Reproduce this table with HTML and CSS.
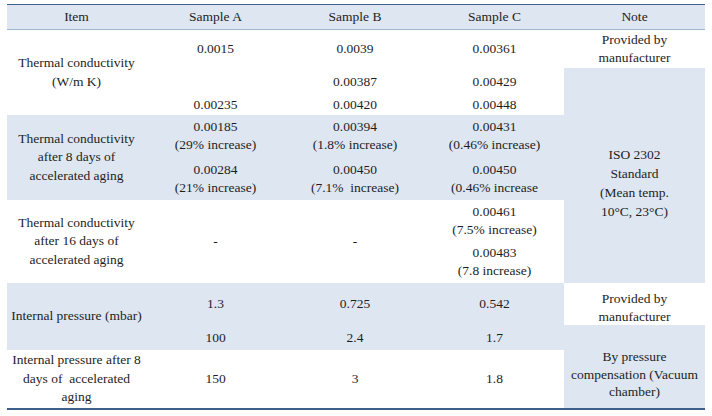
FILE: index.html
```html
<!DOCTYPE html>
<html>
<head>
<meta charset="utf-8">
<link rel="stylesheet" href="styles.css">
</head>
<body>
<div class="table">
  <div class="c head">Item</div>
  <div class="c head">Sample A</div>
  <div class="c head">Sample B</div>
  <div class="c head">Sample C</div>
  <div class="c head">Note</div>

  <div class="c label s3">Thermal conductivity<br>(W/m K)</div>
  <div class="c">0.0015</div>
  <div class="c">0.0039</div>
  <div class="c">0.00361</div>
  <div class="c">Provided by<br>manufacturer</div>

  <div class="c"></div>
  <div class="c">0.00387</div>
  <div class="c">0.00429</div>
  <div class="c blue s6 iso">ISO 2302<br>Standard<br>(Mean temp.<br>10°C, 23°C)</div>

  <div class="c">0.00235</div>
  <div class="c">0.00420</div>
  <div class="c">0.00448</div>

  <div class="c label blue s2">Thermal conductivity<br>after 8 days of<br>accelerated aging</div>
  <div class="c blue">0.00185<br>(29% increase)</div>
  <div class="c blue">0.00394<br>(1.8% increase)</div>
  <div class="c blue">0.00431<br>(0.46% increase)</div>

  <div class="c blue">0.00284<br>(21% increase)</div>
  <div class="c blue">0.00450<br>(7.1%&nbsp; increase)</div>
  <div class="c blue">0.00450<br>(0.46% increase</div>

  <div class="c label s2">Thermal conductivity<br>after 16 days of<br>accelerated aging</div>
  <div class="c s2">-</div>
  <div class="c s2">-</div>
  <div class="c">0.00461<br>(7.5% increase)</div>

  <div class="c">0.00483<br>(7.8 increase)</div>

  <div class="c label blue s2">Internal pressure (mbar)</div>
  <div class="c blue">1.3</div>
  <div class="c blue">0.725</div>
  <div class="c blue">0.542</div>
  <div class="c prov">Provided by<br>manufacturer</div>

  <div class="c blue">100</div>
  <div class="c blue">2.4</div>
  <div class="c blue">1.7</div>
  <div class="c blue s2 press">By pressure<br>compensation (Vacuum<br>chamber)</div>

  <div class="c label">Internal pressure after 8<br>days of&nbsp; accelerated<br>aging</div>
  <div class="c">150</div>
  <div class="c">3</div>
  <div class="c">1.8</div>
</div>
</body>
</html>
```

FILE: styles.css
```css
html, body {
  margin: 0;
  padding: 0;
  background: #ffffff;
}

body {
  padding: 4px 7px 0 7px;
  font-family: "Liberation Serif", "Times New Roman", serif;
  font-size: 13.5px;
  color: #1e1e1e;
}

.table {
  width: 698px;
  display: grid;
  grid-template-columns: 139px 139px 140px 139px 141px;
  grid-template-rows: 25px 38px 27px 20px 42px 43px 41px 42px 42px 25px 58px;
  border-top: 1px solid #3d5f8c;
  border-bottom: 2px solid #3d5f8c;
}

.c {
  display: flex;
  align-items: center;
  justify-content: center;
  text-align: center;
  line-height: 18px;
  background: #ffffff;
}

.head {
  background: #dde6f1;
  border-bottom: 1px solid #9fb4cf;
}

.blue {
  background: #dde6f1;
}

.s2 { grid-row: span 2; }
.s3 { grid-row: span 3; }
.s6 { grid-row: span 6; }

.label {
  line-height: 18.5px;
}

.iso {
  padding-top: 14px;
  line-height: 19px;
}

.press {
  padding-top: 16px;
  line-height: 17.5px;
}

.prov {
  padding-top: 8px;
}
```
